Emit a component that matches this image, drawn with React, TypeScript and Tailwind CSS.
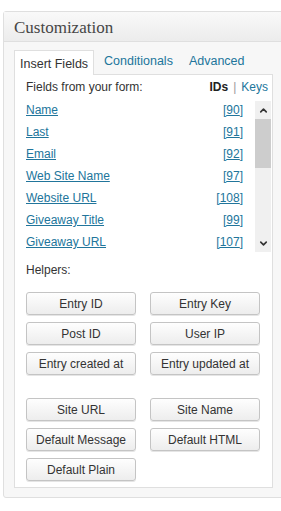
import { ChevronUp, ChevronDown } from "lucide-react";

const fields = [
  { name: "Name", id: 90 },
  { name: "Last", id: 91 },
  { name: "Email", id: 92 },
  { name: "Web Site Name", id: 97 },
  { name: "Website URL", id: 108 },
  { name: "Giveaway Title", id: 99 },
  { name: "Giveaway URL", id: 107 },
];

function HelperButton({ label }: { label: string }) {
  return (
    <button className="h-[23px] w-[110px] rounded-[3px] border border-[#c4c4c4] bg-gradient-to-b from-[#fefefe] to-[#ededed] text-[12px] text-[#333] shadow-[0_1px_0_#e5e5e5]">
      {label}
    </button>
  );
}

export default function App() {
  return (
    <div
      className="w-[281px] h-[511px] overflow-hidden bg-white pt-[11px] pl-[3px]"
      style={{ fontFamily: '"Liberation Sans", Arial, sans-serif' }}
    >
      <div className="w-[290px] rounded-[3px] border border-[#dfdfdf] bg-[#f7f7f7]">
        <div className="h-[30px] border-b border-[#dfdfdf] bg-gradient-to-b from-[#f9f9f9] to-[#ececec] pl-[10px] pt-[3px]">
          <span
            className="text-[17px] text-[#464646]"
            style={{ fontFamily: '"Liberation Serif", Georgia, serif' }}
          >
            Customization
          </span>
        </div>

        <div className="pl-[10px] pt-[8px] pb-[9px]">
          {/* tabs */}
          <div className="flex items-end h-[24px] text-[12.5px]">
            <div className="relative z-10 -mb-px h-[25px] border border-b-0 border-[#dfdfdf] bg-white px-[5px] pt-[4px] text-[#333]">
              Insert Fields
            </div>
            <div className="pl-[10px] pb-[3px] text-[#21759b]">Conditionals</div>
            <div className="pl-[16px] pb-[3px] text-[#21759b]">Advanced</div>
          </div>

          <div className="w-[259px] border border-[#dfdfdf] bg-white pl-[11px] pr-[1px] pt-[3px] pb-[6px] text-[12px] text-[#333]">
            <div className="flex h-[17px] items-center justify-between pr-[3px]">
              <span>Fields from your form:</span>
              <span>
                <b className="text-[#222]">IDs</b>
                <span className="px-[5px] text-[#999]">|</span>
                <span className="text-[#21759b]">Keys</span>
              </span>
            </div>

            <div className="mt-[4px] flex h-[154px]">
              <div className="flex-1 pr-[12px]">
                {fields.map((f) => (
                  <div key={f.id} className="flex h-[22px] items-center justify-between text-[#21759b]">
                    <span className="underline">{f.name}</span>
                    <span className="underline">[{f.id}]</span>
                  </div>
                ))}
              </div>
              <div className="mt-[2px] flex h-[151px] w-[16px] flex-col bg-[#f0f0f0]">
                <div className="flex h-[18px] items-center justify-center">
                  <ChevronUp size={11} strokeWidth={3.5} className="text-[#333]" />
                </div>
                <div className="h-[49px] bg-[#cdcdcd]" />
                <div className="flex-1" />
                <div className="flex h-[18px] items-center justify-center">
                  <ChevronDown size={11} strokeWidth={3.5} className="text-[#333]" />
                </div>
              </div>
            </div>

            <div className="mt-[10px] h-[15px] leading-[15px]">Helpers:</div>

            <div className="mt-[14px] grid grid-cols-[110px_110px] gap-x-[14px] gap-y-[7px]">
              <HelperButton label="Entry ID" />
              <HelperButton label="Entry Key" />
              <HelperButton label="Post ID" />
              <HelperButton label="User IP" />
              <HelperButton label="Entry created at" />
              <HelperButton label="Entry updated at" />
            </div>

            <div className="mt-[23px] grid grid-cols-[110px_110px] gap-x-[14px] gap-y-[7px]">
              <HelperButton label="Site URL" />
              <HelperButton label="Site Name" />
              <HelperButton label="Default Message" />
              <HelperButton label="Default HTML" />
              <HelperButton label="Default Plain" />
            </div>
          </div>
        </div>
      </div>
    </div>
  );
}
